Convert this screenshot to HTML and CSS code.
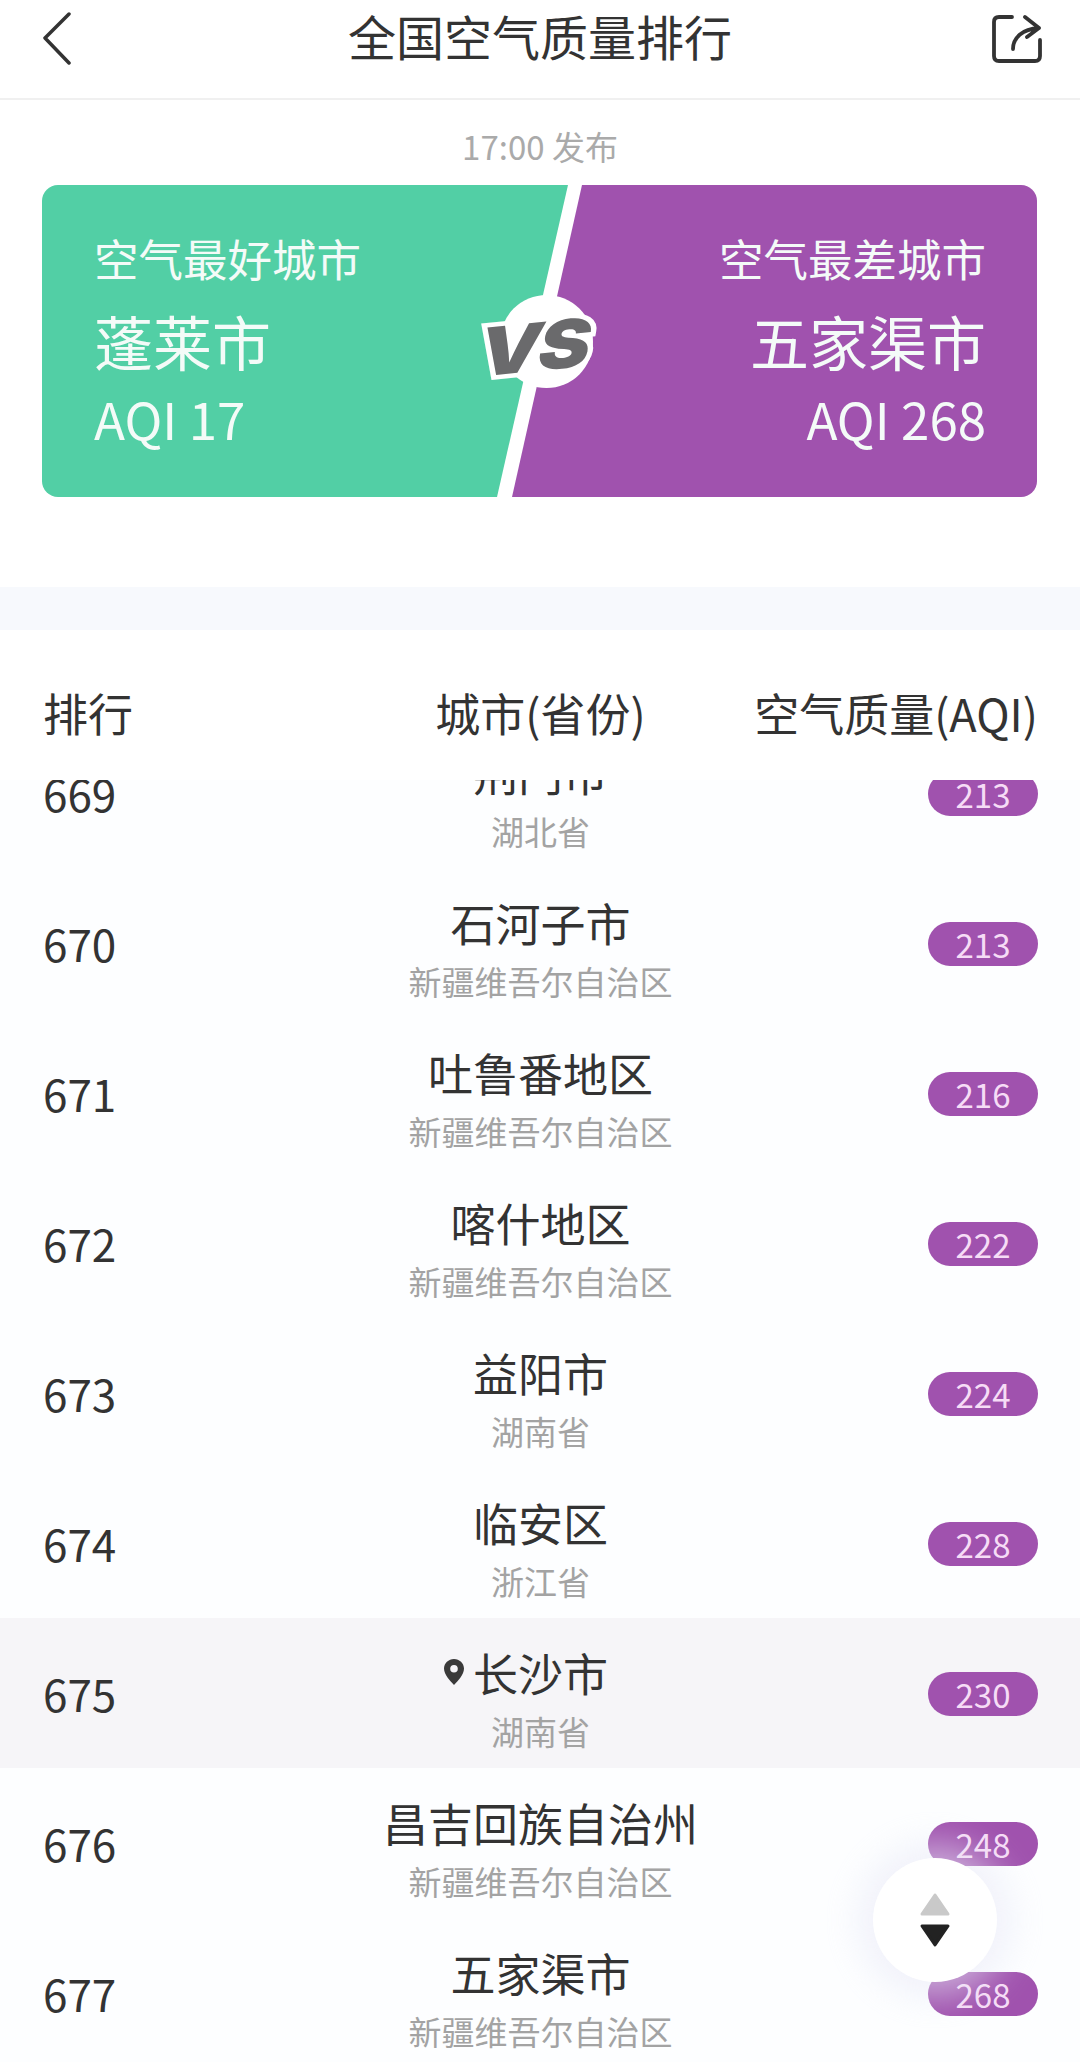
FILE: index.html
```html
<!DOCTYPE html>
<html lang="zh-CN">
<head>
    <meta charset="UTF-8">
    <meta name="viewport" content="width=device-width, initial-scale=1.0">
    <title>全国空气质量排行</title>
    <link rel="stylesheet" href="styles.css">
</head>
<body>
    <div class="page">
        <header class="topbar">
            <svg class="icon-back" viewBox="0 0 30 54" width="30" height="54"><path d="M27 2 L3 26 L27 51" fill="none" stroke="#333" stroke-width="3.5" stroke-linecap="round" stroke-linejoin="round"/></svg>
            <h1 class="title">全国空气质量排行</h1>
            <svg class="icon-share" viewBox="0 0 52 50" width="52" height="50"><path d="M22 3 H9 Q4 3 4 8 V42 Q4 47 9 47 H45 Q50 47 50 42 V26 M23 35 C23 24 32 15 49 14 M35 3 L49 14 L37 23" fill="none" stroke="#333" stroke-width="3.8" stroke-linecap="round" stroke-linejoin="round"/></svg>
        </header>

        <p class="publish">17:00 发布</p>

        <section class="versus">
            <div class="side side-good">
                <div class="side-label">空气最好城市</div>
                <div class="side-city">蓬莱市</div>
                <div class="side-aqi">AQI 17</div>
            </div>
            <div class="side side-bad">
                <div class="side-label">空气最差城市</div>
                <div class="side-city">五家渠市</div>
                <div class="side-aqi">AQI 268</div>
            </div>
            <div class="vs-badge"><span class="vs-text">VS</span></div>
        </section>

        <div class="band"></div>

        <div class="table-head">
            <span>排行</span>
            <span class="col-city">城市(省份)</span>
            <span class="col-aqi">空气质量(AQI)</span>
        </div>

        <div class="list">
            <div class="list-inner">
                <div class="row">
                    <span class="rank">669</span>
                    <div class="city"><div class="city-name">荆门市</div><div class="city-prov">湖北省</div></div>
                    <div class="col-aqi"><span class="pill">213</span></div>
                </div>
                <div class="row">
                    <span class="rank">670</span>
                    <div class="city"><div class="city-name">石河子市</div><div class="city-prov">新疆维吾尔自治区</div></div>
                    <div class="col-aqi"><span class="pill">213</span></div>
                </div>
                <div class="row">
                    <span class="rank">671</span>
                    <div class="city"><div class="city-name">吐鲁番地区</div><div class="city-prov">新疆维吾尔自治区</div></div>
                    <div class="col-aqi"><span class="pill">216</span></div>
                </div>
                <div class="row">
                    <span class="rank">672</span>
                    <div class="city"><div class="city-name">喀什地区</div><div class="city-prov">新疆维吾尔自治区</div></div>
                    <div class="col-aqi"><span class="pill">222</span></div>
                </div>
                <div class="row">
                    <span class="rank">673</span>
                    <div class="city"><div class="city-name">益阳市</div><div class="city-prov">湖南省</div></div>
                    <div class="col-aqi"><span class="pill">224</span></div>
                </div>
                <div class="row">
                    <span class="rank">674</span>
                    <div class="city"><div class="city-name">临安区</div><div class="city-prov">浙江省</div></div>
                    <div class="col-aqi"><span class="pill">228</span></div>
                </div>
                <div class="row row-current">
                    <span class="rank">675</span>
                    <div class="city">
                        <div class="city-name">
                            <span class="name-wrap">
                                <svg class="icon-pin" viewBox="0 0 20 26" width="20" height="26"><path fill-rule="evenodd" d="M10 0 C4.5 0 0 4.3 0 9.6 C0 15.5 6 22 10 26 C14 22 20 15.5 20 9.6 C20 4.3 15.5 0 10 0 Z M10 6 A3.8 3.8 0 1 1 10 13.6 A3.8 3.8 0 1 1 10 6 Z" fill="#3a3a3a"/></svg>
                                长沙市
                            </span>
                        </div>
                        <div class="city-prov">湖南省</div>
                    </div>
                    <div class="col-aqi"><span class="pill">230</span></div>
                </div>
                <div class="row">
                    <span class="rank">676</span>
                    <div class="city"><div class="city-name">昌吉回族自治州</div><div class="city-prov">新疆维吾尔自治区</div></div>
                    <div class="col-aqi"><span class="pill">248</span></div>
                </div>
                <div class="row">
                    <span class="rank">677</span>
                    <div class="city"><div class="city-name">五家渠市</div><div class="city-prov">新疆维吾尔自治区</div></div>
                    <div class="col-aqi"><span class="pill">268</span></div>
                </div>
            </div>
        </div>

        <button class="fab">
            <svg viewBox="0 0 32 56" width="32" height="56">
                <path d="M16 3 L29 22 H3 Z" fill="#c9c9c9" stroke="#c9c9c9" stroke-width="3" stroke-linejoin="round"/>
                <path d="M3 34 H29 L16 53 Z" fill="#222" stroke="#222" stroke-width="3" stroke-linejoin="round"/>
            </svg>
        </button>
    </div>
</body>
</html>
```

FILE: styles.css
```css
body {
    margin: 0;
    background: #fff;
    font-family: "Noto Sans CJK SC", "Noto Sans", sans-serif;
    color: #333;
}
.page {
    position: relative;
    width: 1080px;
    height: 2062px;
    display: flex;
    flex-direction: column;
    overflow: hidden;
}

/* top bar */
.topbar {
    flex: none;
    display: grid;
    grid-template-columns: minmax(0, 1fr) auto minmax(0, 1fr);
    align-items: center;
    height: 74px;
    padding: 0 38px 24px 42px;
    border-bottom: 2px solid #f0f0f0;
}
.title {
    margin: 0 4px 8px 0;
    font-size: 48px;
    font-weight: 400;
    line-height: 70px;
    color: #333;
}
.icon-share {
    justify-self: end;
}

.publish {
    margin: 0;
    height: 85px;
    line-height: 92px;
    text-align: center;
    font-size: 33px;
    color: #aaa;
    flex: none;
}

/* best / worst card */
.versus {
    position: relative;
    flex: none;
    display: flex;
    height: 312px;
    margin: 0 43px 0 42px;
    border-radius: 16px;
    overflow: hidden;
    color: #f4fbf8;
}
.side {
    flex: none;
    width: 526px;
    height: 100%;
    box-sizing: border-box;
    padding-top: 42px;
}
.side-good {
    padding-left: 52px;
    background: #52cfa5;
    clip-path: polygon(0 0, 526px 0, 455px 100%, 0 100%);
}
.side-bad {
    width: 525px;
    margin-left: -56px;
    padding-right: 51px;
    text-align: right;
    background: #a052ae;
    clip-path: polygon(70px 0, 100% 0, 100% 100%, 0 100%);
}
.side-label {
    font-size: 44.5px;
    line-height: 62px;
}
.side-city {
    font-size: 59px;
    line-height: 84px;
    margin-top: 10px;
}
.side-aqi {
    font-size: 51px;
    line-height: 60px;
    margin-top: 5px;
}
.vs-badge {
    position: absolute;
    left: 458px;
    top: 110px;
    width: 93px;
    height: 93px;
    border-radius: 50%;
    background: #fff;
    display: flex;
    align-items: center;
    justify-content: center;
}
.vs-text {
    font-family: Inter, "DejaVu Sans", sans-serif;
    font-weight: 900;
    font-style: italic;
    font-size: 66px;
    letter-spacing: -3px;
    line-height: 1;
    color: #6a6a6c;
    -webkit-text-stroke: 9px #fff;
    paint-order: stroke fill;
    transform: translate(-13px, 5px) scaleX(1.2) rotate(-7deg) skewX(-8deg);
}

.band {
    flex: none;
    height: 43px;
    margin-top: 90px;
    background: #f7f9fd;
}

/* table */
.table-head, .row {
    display: grid;
    grid-template-columns: minmax(0, 1fr) 500px minmax(0, 1fr);
    align-items: center;
    padding: 0 42px 0 43px;
}
.table-head {
    flex: none;
    height: 150px;
    font-size: 45px;
    color: #333;
    line-height: 60px;
    padding-top: 16px;
    box-sizing: border-box;
    white-space: nowrap;
}
.col-city {
    text-align: center;
}
.col-aqi {
    display: flex;
    justify-content: flex-end;
}
.list {
    flex: 1;
    min-height: 0;
    overflow: hidden;
}
.list-inner {
    margin-top: -62px;
}
.row {
    height: 150px;
    background: #fdfeff;
}
.row-current {
    background: #f6f5f8;
}
.rank {
    font-size: 44px;
    color: #333;
}
.city {
    text-align: center;
    padding-top: 12px;
}
.city-name {
    font-size: 45px;
    line-height: 56px;
    color: #333;
    white-space: nowrap;
}
.city-prov {
    margin-top: 8px;
    font-size: 33px;
    line-height: 44px;
    color: #a3a3a3;
    white-space: nowrap;
}
.name-wrap {
    position: relative;
}
.icon-pin {
    position: absolute;
    left: -29px;
    top: 19px;
}
.pill {
    width: 110px;
    height: 44px;
    margin-top: 2px;
    border-radius: 22px;
    background: #a052ae;
    color: #f6dcf6;
    font-size: 33px;
    line-height: 44px;
    text-align: center;
}

/* floating sort button */
.fab {
    position: absolute;
    left: 873px;
    top: 1858px;
    width: 124px;
    height: 124px;
    padding: 0;
    border: none;
    border-radius: 50%;
    background: #fff;
    box-shadow: 0 0 36px 14px rgba(232, 234, 246, 0.6);
    display: flex;
    align-items: center;
    justify-content: center;
}
```
